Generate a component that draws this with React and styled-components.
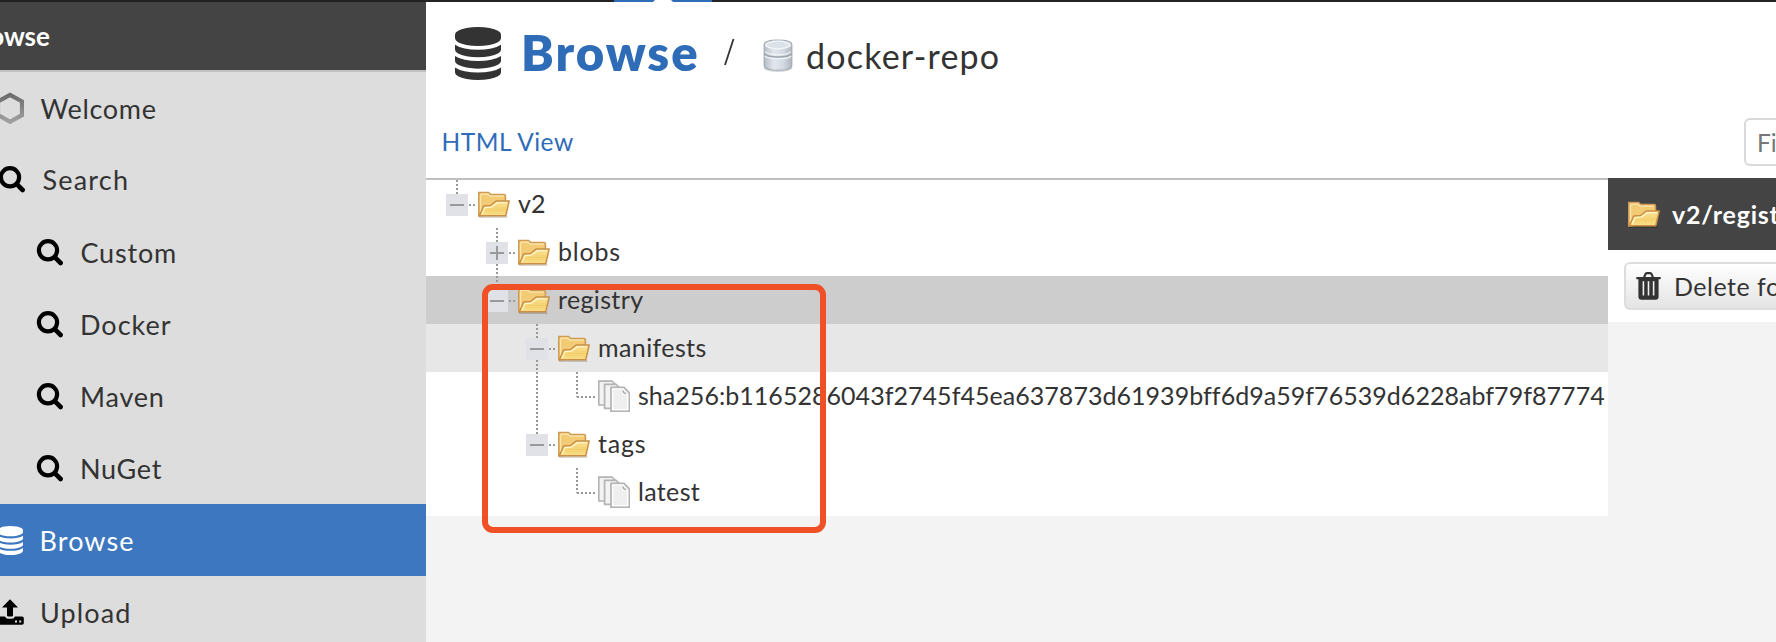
import React from "react";
import styled, { createGlobalStyle, css } from "styled-components";

const Global = createGlobalStyle`
  * { box-sizing: border-box; }
  html, body { margin: 0; padding: 0; overflow: hidden; }
  body { font-family: Lato, "Open Sans", sans-serif; color: #333; background: #f3f3f3; }
  svg { display: block; flex: none; }
`;

const Page = styled.div`
  width: 1776px;
  height: 642px;
  display: flex;
  flex-direction: column;
  overflow: hidden;
`;
const TopStrip = styled.div`
  height: 2px;
  flex: none;
  background: #222;
  padding-left: 614px;
`;
const ActiveTab = styled.div`
  width: 98px;
  height: 2px;
  background: #2e6cb8;
  display: flex;
  justify-content: center;
`;
const Notch = styled.div`
  width: 20px;
  height: 2px;
  background: #fff;
  clip-path: polygon(2px 0, 18px 0, 100% 100%, 0 100%);
`;
const Body = styled.div`
  flex: 1;
  min-height: 0;
  display: flex;
`;
const Label = styled.span`
  white-space: nowrap;
  letter-spacing: ${(p) => p.$ls || 0}px;
`;

/* Sidebar */
const Sidebar = styled.nav`
  width: 426px;
  flex: none;
  background: #ddd;
  overflow: hidden;
`;
const SidebarTitle = styled.div`
  height: 70px;
  background: #444;
  border-bottom: 2px solid #c0c0c0;
  color: #fff;
  font-size: 26px;
  font-weight: 700;
  line-height: 69px;
  text-indent: -37px;
`;
const MenuItem = styled.div`
  height: 72px;
  display: flex;
  align-items: center;
  font-size: 27px;
  padding-left: ${(p) => (p.$nested ? 36 : 0)}px;
  padding-bottom: ${(p) => p.$lift || 0}px;
  ${(p) =>
    p.$active &&
    css`
      background: #3d77bf;
      color: #fff;
    `}
`;
const MenuIcon = styled.span`
  width: 28px;
  margin-left: ${(p) => p.$shift || 0}px;
  margin-right: ${(p) => p.$gap}px;
  flex: none;
  display: flex;
`;

/* Main column */
const Main = styled.main`
  flex: 1;
  min-width: 0;
  display: flex;
  flex-direction: column;
`;
const Header = styled.header`
  height: 96px;
  flex: none;
  background: #fff;
  display: flex;
  align-items: center;
  padding: 6px 0 0 29px;
`;
const Title = styled.h1`
  width: 180px;
  margin: 0 22px 0 20px;
  padding-bottom: 2px;
  font-size: 49px;
  line-height: 60px;
  font-weight: 800;
  color: #2e6cb8;
`;
const RepoMark = styled.span`
  margin: 6px 13px 0 28px;
`;
const Repo = styled.div`
  padding-top: 5px;
  font-size: 34px;
  line-height: 40px;
`;
const Toolbar = styled.div`
  height: 80px;
  flex: none;
  background: #fff;
  display: flex;
  justify-content: space-between;
  align-items: center;
  padding: 8px 0 0 15.5px;
  color: #2e6cb8;
  font-size: 24.5px;
`;
const ViewLink = styled(Label)`
  padding-bottom: 2px;
`;
const FilterBox = styled.div`
  width: 32px;
  height: 48px;
  border: 2px solid #d9d9d9;
  border-right: 0;
  border-radius: 6px 0 0 6px;
  padding-left: 11px;
  line-height: 45px;
  color: #777;
  overflow: hidden;
`;
const Panels = styled.div`
  flex: 1;
  display: flex;
  align-items: flex-start;
`;
const Tree = styled.div`
  width: 1182px;
  flex: none;
  border-top: 2px solid #c0c0c0;
  background: #fff;
  position: relative;
`;
const TreeRow = styled.div`
  height: 48px;
  display: flex;
  align-items: center;
  padding-left: 20px;
  font-size: 25px;
  background: ${(p) => p.$bg || "transparent"};
`;
const RowLabel = styled(Label)`
  margin-left: 8px;
  padding-bottom: 3px;
`;
const Highlight = styled.div`
  position: absolute;
  left: 56px;
  top: 104px;
  width: 344px;
  height: 249px;
  border: 6px solid #ef5026;
  border-radius: 11px;
`;
const Detail = styled.section`
  flex: 1;
  min-width: 0;
  overflow: hidden;
`;
const DetailTitle = styled.div`
  height: 72px;
  background: #444;
  color: #fff;
  display: flex;
  align-items: center;
  gap: 12px;
  padding: 0 0 1px 20px;
  font-size: 25px;
  font-weight: 700;
`;
const Actions = styled.div`
  height: 72px;
  background: #fff;
  padding: 12px 0 12px 16px;
`;
const Button = styled.div`
  width: 200px;
  height: 48px;
  border: 2px solid #ddd;
  border-radius: 6px;
  background: linear-gradient(#fff, #e4e4e4);
  display: flex;
  align-items: center;
  gap: 13px;
  padding: 0 0 1px 10px;
  font-size: 25px;
`;

/* Icons */
const DatabaseIcon = ({ w, h, color }) => (
  <svg width={w} height={h} viewBox="0 0 1536 1792" preserveAspectRatio="none" fill={color}>
    <path d="M768 768q237 0 443-43t325-127v170q0 69-103 128t-280 93.5-385 34.5-385-34.5-280-93.5-103-128v-170q119 84 325 127t443 43zm0 768q237 0 443-43t325-127v170q0 69-103 128t-280 93.5-385 34.5-385-34.5-280-93.5-103-128v-170q119 84 325 127t443 43zm0-384q237 0 443-43t325-127v170q0 69-103 128t-280 93.5-385 34.5-385-34.5-280-93.5-103-128v-170q119 84 325 127t443 43zm0-1152q208 0 385 34.5t280 93.5 103 128v128q0 69-103 128t-280 93.5-385 34.5-385-34.5-280-93.5-103-128v-128q0-69 103-128t280-93.5 385-34.5z" />
  </svg>
);
const HexIcon = () => (
  <svg width="28" height="32" viewBox="0 0 28 32">
    <defs>
      <linearGradient id="hex" x1="0" y1="0" x2="0" y2="1">
        <stop offset="0" stopColor="#6c6c6c" />
        <stop offset="1" stopColor="#a0a0a0" />
      </linearGradient>
    </defs>
    <path d="M14 2.9 26 9.5V23.1L14 29.8 2 23.1V9.5Z" fill="none" stroke="url(#hex)" strokeWidth="4.2" />
  </svg>
);
const SearchIcon = () => (
  <svg width="28" height="28" viewBox="0 0 28 28" fill="none" stroke="#000">
    <circle cx="12" cy="12.3" r="9.1" strokeWidth="4.2" />
    <path d="M18.8 19.2 24.6 25" strokeWidth="4.6" strokeLinecap="round" />
  </svg>
);
const UploadIcon = () => (
  <svg width="28" height="26" viewBox="0 0 28 26">
    <path d="M14 0.3 22 8.6H17V16.2Q17 17.4 15.8 17.4H12.2Q11 17.4 11 16.2V8.6H6Z" />
    <path
      fillRule="evenodd"
      d="M2 17.5H9Q10 19.7 12 19.7H16Q18 19.7 19 17.5H26Q27.8 17.5 27.8 19.3V24Q27.8 25.7 26 25.7H2Q.2 25.7.2 24V19.3Q.2 17.5 2 17.5ZM19 21.4V23.4H21V21.4ZM23.2 21.4V23.4H25.2V21.4Z"
    />
  </svg>
);
const RepoIcon = () => (
  <svg width="30" height="34" viewBox="0 0 26 34" preserveAspectRatio="none">
    <defs>
      <linearGradient id="repo" x1="0" x2="1" y1="0" y2="0">
        <stop offset="0" stopColor="#b4bcc6" />
        <stop offset=".35" stopColor="#e2e7ee" />
        <stop offset=".7" stopColor="#d3d9e1" />
        <stop offset="1" stopColor="#adb5bf" />
      </linearGradient>
    </defs>
    <ellipse cx="13" cy="29" rx="12.5" ry="4" fill="#d5d8dc" />
    <path d="M1 6Q1 1 13 1T25 6V26Q25 31.2 13 31.2T1 26Z" fill="url(#repo)" stroke="#a3abb4" strokeWidth="1" />
    <ellipse cx="13" cy="6" rx="10.6" ry="3.8" fill="#dce2ea" stroke="#f2f5f8" strokeWidth="1.3" />
    <path d="M1.2 15Q4 18 13 18T24.8 15" fill="none" stroke="#9fa7b1" strokeWidth="1.4" />
    <path d="M1.6 17Q4 19.8 13 19.8T24.4 17M2 12.5Q4 15.8 13 15.8T24 12.5" fill="none" stroke="#f1f4f7" strokeWidth="1.2" />
  </svg>
);
const FolderIcon = () => (
  <svg width="32" height="28" viewBox="0 -1.3 32 28">
    <defs>
      <linearGradient id="folder" x1="0" y1="0" x2="0" y2="1">
        <stop offset="0" stopColor="#fae49a" />
        <stop offset=".6" stopColor="#f5d06e" />
        <stop offset="1" stopColor="#f9e08c" />
      </linearGradient>
    </defs>
    <path d="M1 24.9H29L29.6 26.5H1Z" fill="#000" opacity=".22" />
    <path d="M.8 1.2H10.6L12.6 3.2H26Q27.4 3.2 27.4 4.8V22L.8 24.6Z" fill="#f2cb74" stroke="#cf9c58" strokeWidth="1.6" />
    <path d="M2.5 3V21M3 2.9H10L12 4.9H26" fill="none" stroke="#fbe6ad" strokeWidth="1.3" />
    <path d="M1.4 24.4 5.6 14.8 12.6 14.2 18.4 9.6H31.2L27.8 24.4Z" fill="url(#folder)" stroke="#c98f45" strokeWidth="1.5" strokeLinejoin="round" />
    <path d="M4.2 22.8 7 16.4 13.4 15.8 19.2 11.3H29.2" fill="none" stroke="#fff3c8" strokeWidth="1.4" />
  </svg>
);
const PagesIcon = () => (
  <svg width="32" height="33" viewBox="0 0 32 33" strokeWidth="1.7" stroke="#b3b4b4" fill="#f3f3f3">
    <path d="M.8 1.2H14L18 5V25H.8Z" />
    <path d="M6.6 4.4H18L23 9V28.4H6.6Z" />
    <path d="M13 7.4H26L31.2 12.6V31.2H13Z" />
    <path d="M14.6 9H25V14.5H29.7V29.7H14.6Z" fill="#efefef" stroke="#fff" strokeWidth="1.2" />
    <path d="M25.2 10.4Q25 13.6 28.2 13.6" fill="none" stroke="#a9a9a9" strokeWidth="1.5" />
  </svg>
);
const TrashIcon = () => (
  <svg width="25" height="28" viewBox="0 0 25 28">
    <path d="M8 5.6 9.3 2.4Q9.7 1.2 11 1.2H14Q15.3 1.2 15.7 2.4L17 5.6" fill="none" stroke="#333" strokeWidth="2.2" />
    <path
      fill="#333"
      fillRule="evenodd"
      d="M1 5H24Q24.8 5 24.8 5.8V6.4Q24.8 7.2 24 7.2H22.6V24.6Q22.6 27.8 19.6 27.8H5.4Q2.4 27.8 2.4 24.6V7.2H1Q.2 7.2.2 6.4V5.8Q.2 5 1 5ZM6.6 9.2V23.6H8.2V9.2ZM11.7 9.2V23.6H13.3V9.2ZM16.8 9.2V23.6H18.4V9.2Z"
    />
  </svg>
);

/* One 40px-wide cell of the tree's guide lines */
const Guide = ({ kind, up, down, width = 32 }) => (
  <svg width={width} height="48" viewBox={`0 0 ${width} 48`} fill="none">
    <g stroke="#999" strokeWidth="2" strokeDasharray="2 2">
      {kind === "elbow" && <path d="M11 0V25M11 25H30" />}
      {kind === "line" && <path d="M11 0V48" />}
      {up && <path d="M11 0V14" />}
      {down && <path d="M11 36V48" />}
      {(kind === "plus" || kind === "minus") && <path d="M23 25H29" />}
    </g>
    {(kind === "plus" || kind === "minus") && (
      <>
        <rect x="0" y="14" width="22" height="22" fill="#e0e2e8" />
        <path d={kind === "plus" ? "M4 25H18M11 18V32" : "M4 25H18"} stroke="#999" strokeWidth="2" />
      </>
    )}
  </svg>
);

const menu = [
  { text: "Welcome", icon: <HexIcon />, shift: -4, gap: 16.5, ls: 0.65 },
  { text: "Search", icon: <SearchIcon />, shift: -2, gap: 16.5, ls: 1.2, lift: 2 },
  { text: "Custom", icon: <SearchIcon />, nested: true, gap: 16.5, ls: 0.8 },
  { text: "Docker", icon: <SearchIcon />, nested: true, gap: 16, ls: 1 },
  { text: "Maven", icon: <SearchIcon />, nested: true, gap: 16, ls: 0.8 },
  { text: "NuGet", icon: <SearchIcon />, nested: true, gap: 16, ls: 0.7 },
  { text: "Browse", icon: <DatabaseIcon w={25} h={29} color="#fff" />, shift: -2, gap: 13.5, active: true, ls: 1.1 },
  { text: "Upload", icon: <UploadIcon />, shift: -4, gap: 16, ls: 1.1 },
];

const rows = [
  { text: "v2", guides: [{ kind: "minus", up: true }] },
  { text: "blobs", ls: 0.8, guides: [{ kind: "none" }, { kind: "plus", up: true, down: true }] },
  { text: "registry", ls: 0.35, bg: "#cdcdcd", guides: [{ kind: "none" }, { kind: "minus", up: true }] },
  { text: "manifests", ls: 0.4, bg: "#e7e7e7", guides: [{ kind: "none" }, { kind: "none" }, { kind: "minus", up: true, down: true }] },
  {
    text: "sha256:b1165286043f2745f45ea637873d61939bff6d9a59f76539d6228abf79f87774",
    ls: 0.04,
    file: true,
    guides: [{ kind: "none" }, { kind: "none" }, { kind: "line" }, { kind: "elbow" }],
  },
  { text: "tags", ls: 0.8, guides: [{ kind: "none" }, { kind: "none" }, { kind: "minus", up: true }] },
  { text: "latest", ls: 0.35, file: true, guides: [{ kind: "none" }, { kind: "none" }, { kind: "none" }, { kind: "elbow" }] },
];

export default function App() {
  return (
    <Page>
      <Global />
      <TopStrip>
        <ActiveTab>
          <Notch />
        </ActiveTab>
      </TopStrip>
      <Body>
        <Sidebar>
          <SidebarTitle>
            <Label>Browse</Label>
          </SidebarTitle>
          {menu.map((item) => (
            <MenuItem key={item.text} $nested={item.nested} $active={item.active} $lift={item.lift}>
              <MenuIcon $shift={item.shift} $gap={item.gap}>
                {item.icon}
              </MenuIcon>
              <Label $ls={item.ls}>{item.text}</Label>
            </MenuItem>
          ))}
        </Sidebar>
        <Main>
          <Header>
            <DatabaseIcon w={46} h={53} color="#333" />
            <Title>
              <Label $ls={2}>Browse</Label>
            </Title>
            <svg width="12" height="30" viewBox="0 0 12 30">
              <path d="M2 27 10.5 1" stroke="#333" strokeWidth="1.8" />
            </svg>
            <RepoMark>
              <RepoIcon />
            </RepoMark>
            <Repo>
              <Label $ls={1.2}>docker-repo</Label>
            </Repo>
          </Header>
          <Toolbar>
            <ViewLink $ls={0.5}>HTML View</ViewLink>
            <FilterBox>
              <Label>Filter</Label>
            </FilterBox>
          </Toolbar>
          <Panels>
            <Tree>
              {rows.map((row) => (
                <TreeRow key={row.text} $bg={row.bg}>
                  {row.guides.map((g, i) => (
                    <Guide key={i} {...g} width={i === row.guides.length - 1 ? 32 : 40} />
                  ))}
                  {row.file ? <PagesIcon /> : <FolderIcon />}
                  <RowLabel $ls={row.ls}>{row.text}</RowLabel>
                </TreeRow>
              ))}
              <Highlight />
            </Tree>
            <Detail>
              <DetailTitle>
                <FolderIcon />
                <Label $ls={0.75}>v2/registry</Label>
              </DetailTitle>
              <Actions>
                <Button>
                  <TrashIcon />
                  <Label $ls={0.5}>Delete folder</Label>
                </Button>
              </Actions>
            </Detail>
          </Panels>
        </Main>
      </Body>
    </Page>
  );
}
